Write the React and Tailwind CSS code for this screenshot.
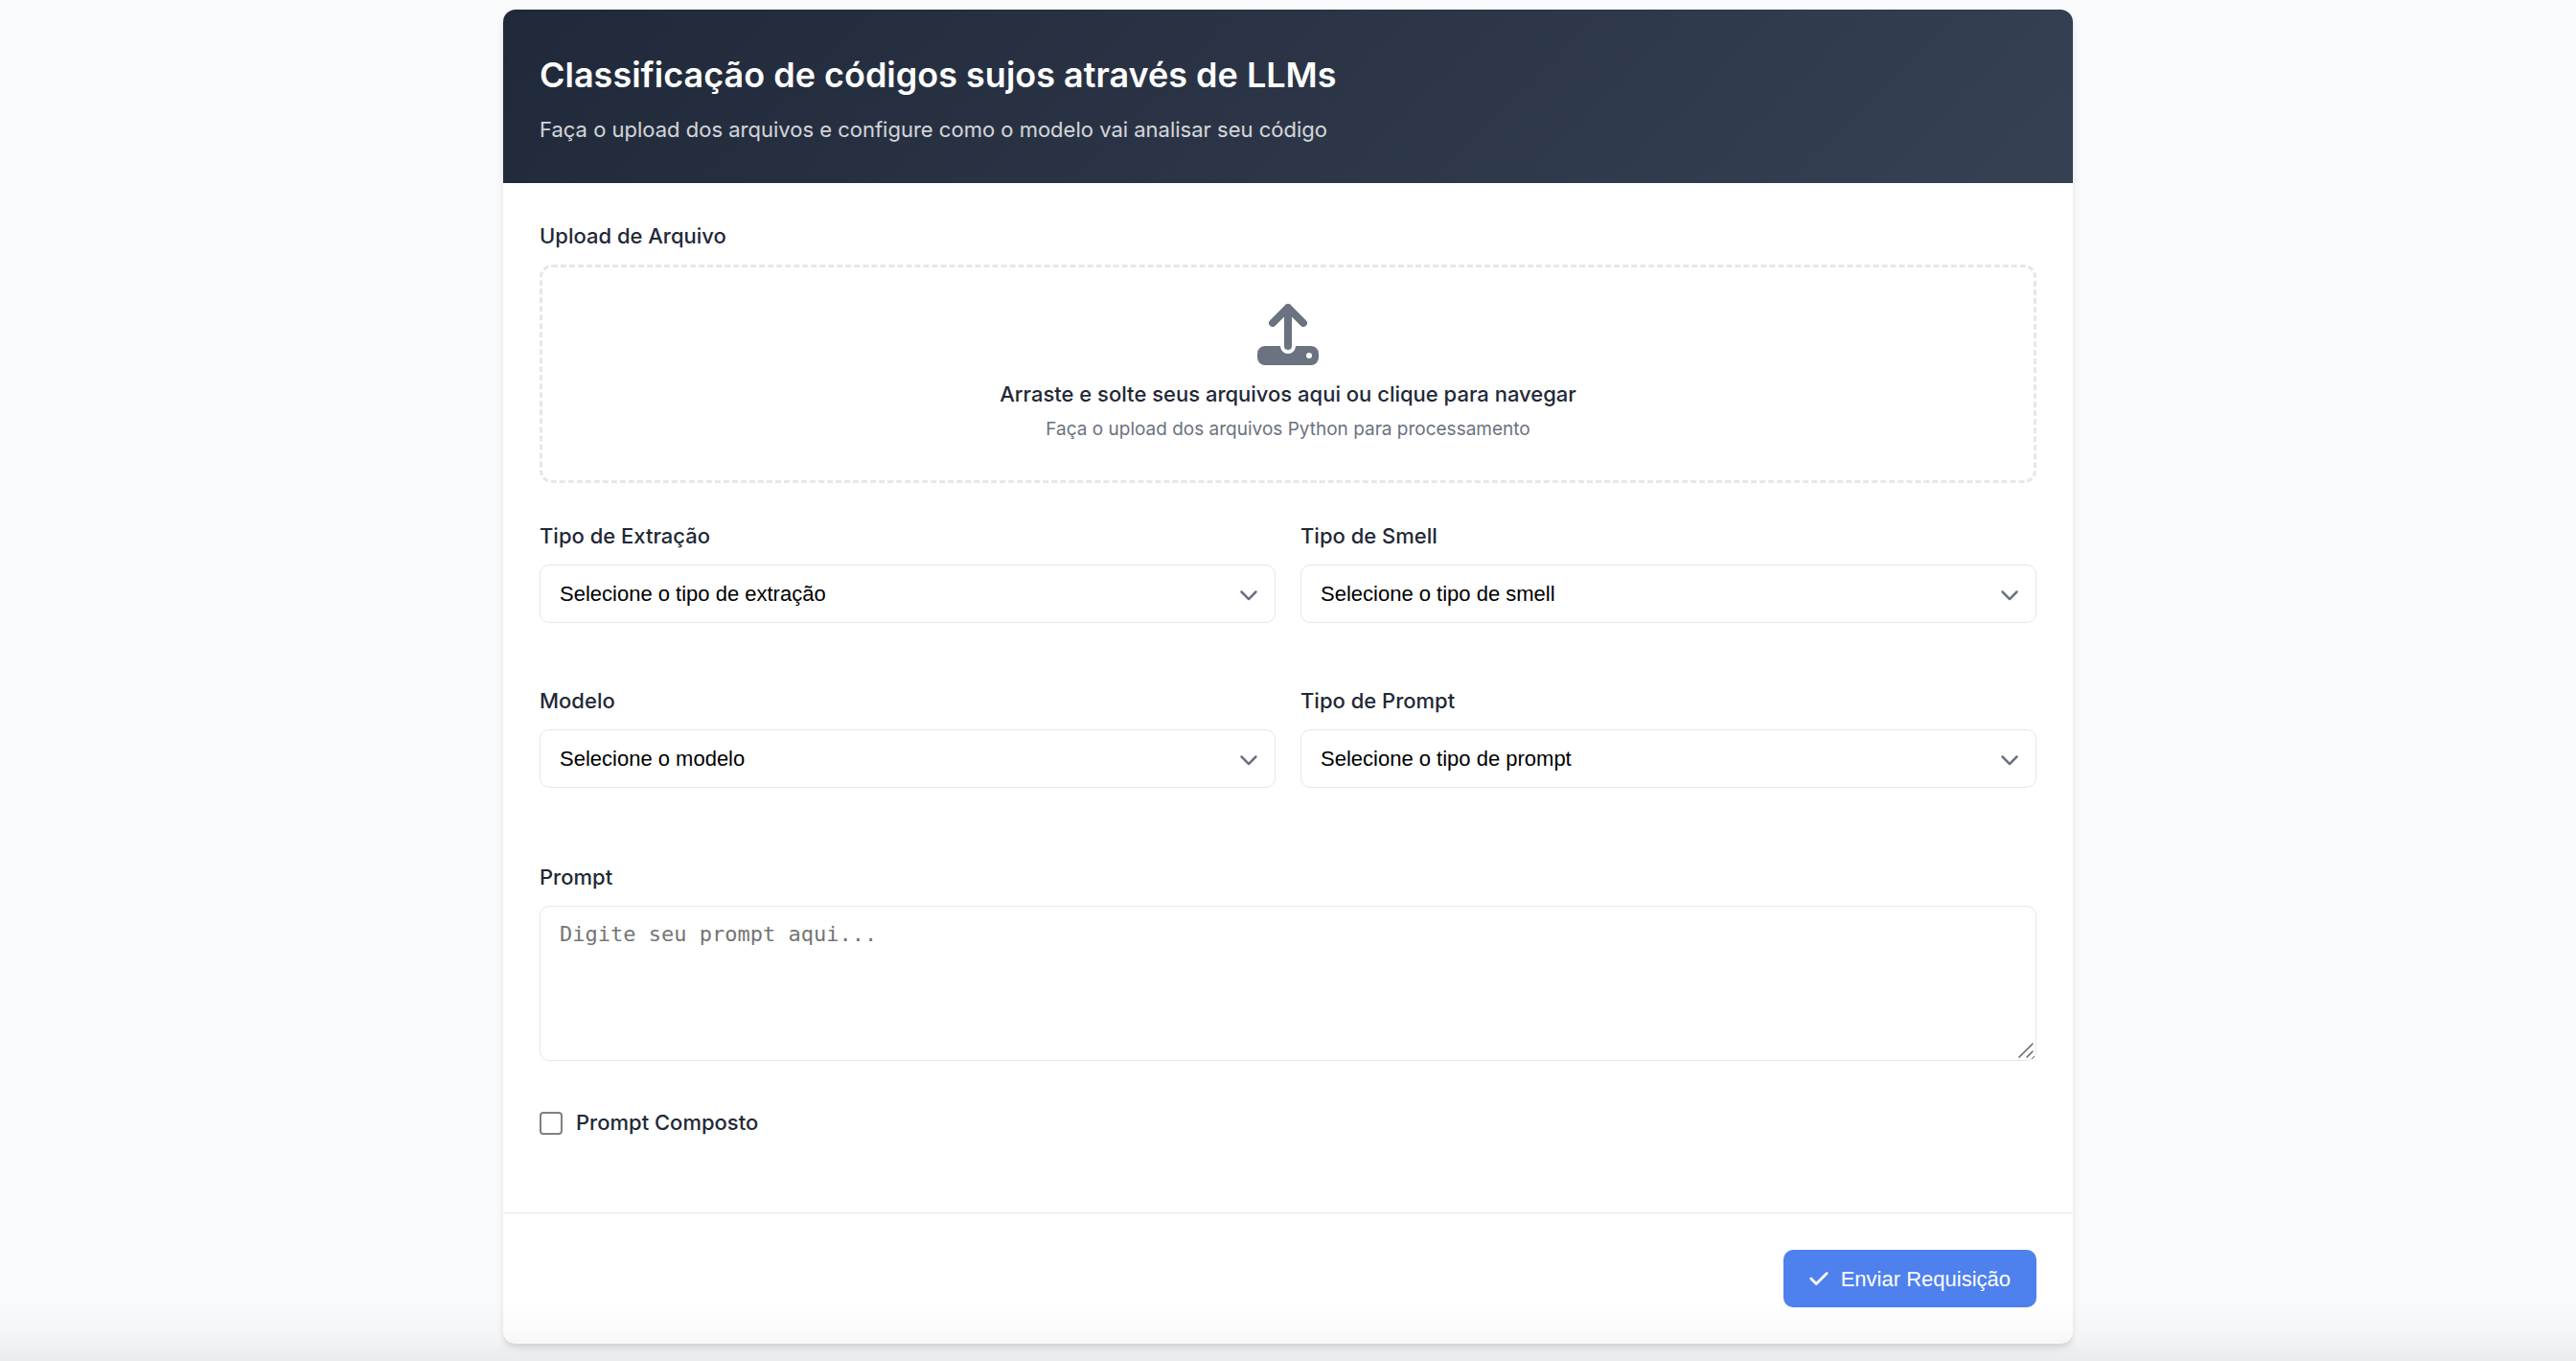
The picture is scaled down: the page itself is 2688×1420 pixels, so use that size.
import { FaCheck, FaChevronDown } from "react-icons/fa6";

const selects = [
  { id: "extracao", label: "Tipo de Extração", placeholder: "Selecione o tipo de extração" },
  { id: "smell", label: "Tipo de Smell", placeholder: "Selecione o tipo de smell" },
  { id: "modelo", label: "Modelo", placeholder: "Selecione o modelo" },
  { id: "tipo-prompt", label: "Tipo de Prompt", placeholder: "Selecione o tipo de prompt" },
];

const labelClass = "block text-[22px] leading-[35px] font-medium text-[#1f2937]";

function UploadIcon() {
  return (
    <svg viewBox="0 0 64 64" className="size-16 text-[#6b7280]" fill="none" aria-hidden="true">
      <path
        d="M8 44h16a8 8 0 0 0 16 0h16a8 8 0 0 1 8 8v4a8 8 0 0 1-8 8H8a8 8 0 0 1-8-8v-4a8 8 0 0 1 8-8Z"
        fill="currentColor"
      />
      <circle cx="54" cy="54" r="3" fill="white" />
      <path d="M16 20 32 4l16 16M32 4v40" stroke="currentColor" strokeWidth="8" strokeLinecap="round" strokeLinejoin="round" />
    </svg>
  );
}

function SelectField({ id, label, placeholder }) {
  return (
    <div>
      <label htmlFor={id} className={labelClass}>{label}</label>
      <div className="relative mt-3">
        <select
          id={id}
          className="block h-[61px] w-full appearance-none rounded-[10px] border border-[#e5e7eb] bg-white px-5 font-['Liberation_Sans',Arial,sans-serif] text-[22px] text-black"
        >
          <option>{placeholder}</option>
        </select>
        <FaChevronDown className="pointer-events-none absolute inset-y-0 right-[18px] my-auto size-5 text-[#6b7280]" />
      </div>
    </div>
  );
}

export default function App() {
  return (
    <div className="min-h-screen bg-[#f9fafc] py-2.5 font-[Inter,sans-serif]">
      <form className="mx-auto max-w-[1638px] overflow-hidden rounded-[13px] bg-white shadow-[0_6px_10px_-2px_rgba(0,0,0,0.1),0_3px_6px_-1px_rgba(0,0,0,0.06)]">
        <header className="bg-linear-135 from-[#20293a] to-[#364153] p-[38px]">
          <h1 className="text-[36px] leading-[61px] font-semibold text-white">
            Classificação de códigos sujos através de LLMs
          </h1>
          <p className="mt-2 text-[22px] leading-9 text-white/80">
            Faça o upload dos arquivos e configure como o modelo vai analisar seu código
          </p>
        </header>

        <main className="px-[38px] pt-[38px] pb-[76px]">
          <label htmlFor="arquivo" className={labelClass}>Upload de Arquivo</label>
          <label
            htmlFor="arquivo"
            className="mt-3 flex cursor-pointer flex-col items-center rounded-[13px] border-3 border-dashed border-[#e5e7eb] p-[38px] text-center"
          >
            <UploadIcon />
            <span className="mt-3 text-[22px] leading-9 font-medium text-[#1f2937]">
              Arraste e solte seus arquivos aqui ou clique para navegar
            </span>
            <span className="mt-1 text-[19px] leading-[30px] text-[#6b7280]">
              Faça o upload dos arquivos Python para processamento
            </span>
            <input id="arquivo" type="file" accept=".py" multiple className="sr-only" />
          </label>

          <div className="mt-[38px] grid grid-cols-2 gap-x-[26px] gap-y-16">
            {selects.map((field) => (
              <SelectField key={field.id} {...field} />
            ))}
          </div>

          <div className="mt-[76px]">
            <label htmlFor="prompt" className={labelClass}>Prompt</label>
            <div className="relative mt-3">
              <textarea
                id="prompt"
                placeholder="Digite seu prompt aqui..."
                className="block h-[162px] w-full resize-y rounded-[10px] border border-[#e5e7eb] bg-white px-5 py-4 font-['DejaVu_Sans_Mono',monospace] text-[22px] leading-[26px] text-black placeholder:text-[#757575]"
              />
              {/* Resize grip drawn over the browser's own */}
              <svg viewBox="0 0 18 18" className="pointer-events-none absolute right-0.5 bottom-0.5 size-[18px]" aria-hidden="true">
                <path d="M0 0h18v12l-6 6H0Z" fill="white" />
                <path d="M2 16 16 2M10 16l6-6" stroke="#6b6b6b" strokeWidth="1.6" strokeLinecap="round" />
              </svg>
            </div>
          </div>

          <div className="mt-[47px] flex items-center gap-[14px]">
            <input
              id="composto"
              type="checkbox"
              className="size-6 appearance-none rounded-[4px] border-2 border-[#808080] bg-white checked:bg-[#4f81ee]"
            />
            <label htmlFor="composto" className={labelClass}>Prompt Composto</label>
          </div>
        </main>

        <footer className="flex justify-end border-t border-[#e5e7eb] p-[38px]">
          <button
            type="button"
            className="flex h-15 items-center gap-[13px] rounded-[10px] bg-[#4f81ee] px-[27px] font-['Liberation_Sans',Arial,sans-serif] text-[22px] text-white"
          >
            <FaCheck className="h-[22px] w-5" />
            Enviar Requisição
          </button>
        </footer>
      </form>
      <div className="pointer-events-none fixed inset-x-0 bottom-0 h-16 bg-linear-to-b from-transparent via-black/2 via-60% to-black/6" />
    </div>
  );
}
